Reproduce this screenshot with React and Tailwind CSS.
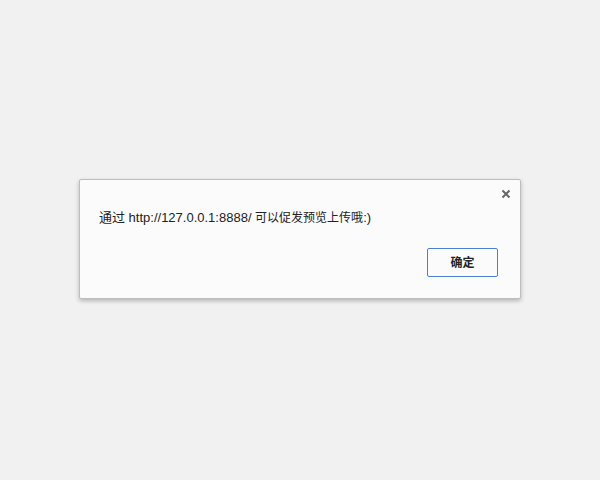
import React from "react";

const App = () => {
  return (
    <div
      className="w-[600px] h-[480px] bg-[#f1f1f1] flex items-start pl-[79px] pt-[179px]"
      style={{ fontFamily: '"Liberation Sans", "Noto Sans CJK SC", sans-serif' }}
    >
      <div className="relative w-[442px] h-[120px] bg-[#fbfbfb] border border-[#bdbdbd] rounded-[2px] shadow-[0_2px_4px_rgba(0,0,0,0.25)]">
        <button className="absolute right-[7px] top-[7px] w-[14px] h-[14px] flex items-center justify-center">
          <svg width="10" height="10" viewBox="0 0 10 10">
            <path d="M1.5 1.5 L8.5 8.5 M8.5 1.5 L1.5 8.5" stroke="#666" strokeWidth="2" />
          </svg>
        </button>
        <div className="flex flex-col pl-[19px] pr-[22px] pt-[29px]">
          <p className="text-[13px] text-[#222] leading-[18px] whitespace-nowrap">
            通过 http://127.0.0.1:8888/ <span className="text-[12px]">可以促发预览上传哦</span>:)
          </p>
          <div className="flex justify-end mt-[21px]">
            <button className="w-[71px] h-[29px] border border-[#4a80d0] rounded-[2px] bg-[#fbfbfb] text-[12px] font-bold text-[#222]">
              确定
            </button>
          </div>
        </div>
      </div>
    </div>
  );
};

export default App;
